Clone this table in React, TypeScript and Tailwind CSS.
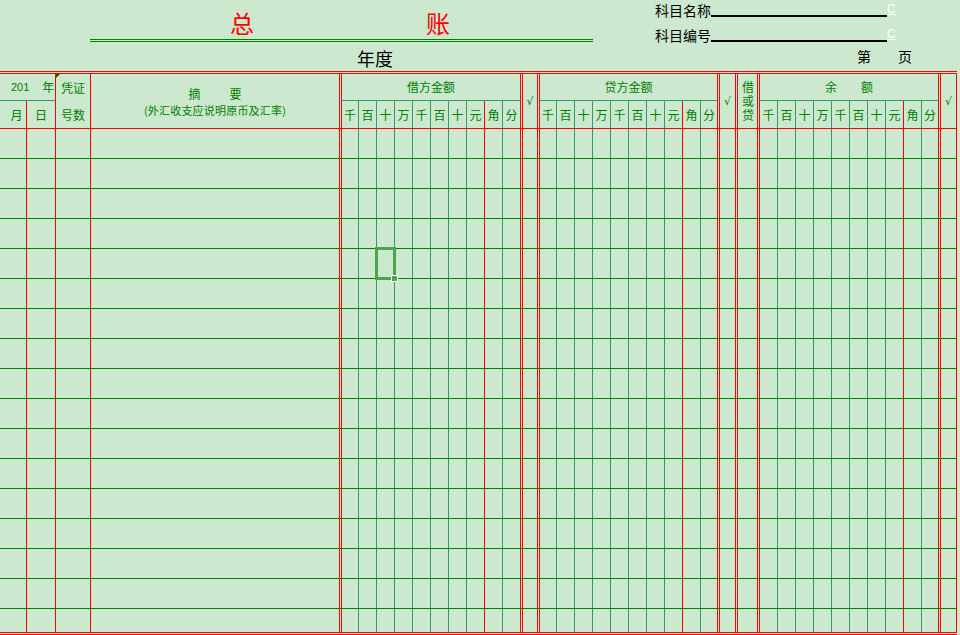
import React from "react";

const G = "border-r border-[#339966]";
const R = "border-r border-[#ff0000]";
const D = "border-r-[3px] border-double border-[#ff0000]";

const DIGITS = ["千", "百", "十", "万", "千", "百", "十", "元", "角", "分"];

// ten money cells: first width, 6 green, red after 元, green after 角, last
function amount(first: string, last: string) {
  return [
    first + " " + G,
    ...Array(6).fill("w-[18px] " + G),
    "w-[18px] " + R,
    "w-[18px] " + G,
    last,
  ];
}

const bodyCols = [
  "w-[27px] " + R,
  "w-[29px] " + R,
  "w-[35px] " + R,
  "w-[251px] " + D,
  ...amount("w-[17px]", "w-[20px] " + D),
  "w-[17px] " + D,
  ...amount("w-[17px]", "w-[19px] " + D),
  "w-[18px] " + D,
  "w-[22px] " + D,
  ...amount("w-[18px]", "w-[19px] " + D),
  "w-[16px] " + R,
];

function BodyRow({ last, selected }: { last?: boolean; selected?: number }) {
  return (
    <div
      className={
        last
          ? "flex h-[26px] border-b-[3px] border-double border-[#ff0000]"
          : "flex h-[30px] border-b border-[#008000]"
      }
    >
      {bodyCols.map((c, i) => (
        <div key={i} className={"relative shrink-0 h-full " + c}>
          {selected === i && (
            <div className="absolute z-10 left-[-2px] top-[-2px] w-[21px] h-[33px] border-[3px] border-[#4ba54b]">
              <div className="absolute left-[13px] top-[25px] w-[7px] h-[7px] bg-[#4ba54b] border border-white" />
            </div>
          )}
        </div>
      ))}
    </div>
  );
}

function Money({ title, cols, gap }: { title: string[]; cols: string[]; gap?: boolean }) {
  return (
    <>
      <div className="h-[27px] flex items-center justify-center border-b border-[#339966]">
        <div className={gap ? "flex gap-[24px]" : "flex"}>
          {title.map((t, i) => (
            <span key={i}>{t}</span>
          ))}
        </div>
      </div>
      <div className="flex-1 flex">
        {cols.map((c, i) => (
          <div key={i} className={"shrink-0 h-full flex items-center justify-center " + c}>
            {DIGITS[i]}
          </div>
        ))}
      </div>
    </>
  );
}

function Check({ w }: { w: string }) {
  return (
    <div className={"shrink-0 flex items-center justify-center text-[11px] font-['DejaVu_Sans',sans-serif] " + w + " " + D}>
      √
    </div>
  );
}

function Header() {
  return (
    <div className="flex h-[55px] border-b border-[#ff0000] text-[12px] leading-none text-[#008000]">
      <div className="w-[56px] shrink-0 flex flex-col border-r border-[#ff0000]">
        <div className="h-[27px] flex items-center border-b border-[#339966]">
          <span className="pl-[11px] text-[11px] font-['Liberation_Sans',sans-serif]">201</span>
          <span className="ml-[13px]">年</span>
        </div>
        <div className="flex-1 flex">
          <div className="w-[27px] flex items-center justify-center pl-[7px] border-r border-[#ff0000]">月</div>
          <div className="flex-1 flex items-center justify-center">日</div>
        </div>
      </div>
      <div className="relative w-[35px] shrink-0 flex flex-col border-r border-[#ff0000]">
        <span className="absolute top-0 left-0 border-t-[4px] border-r-[4px] border-t-[#006600] border-r-transparent" />
        <div className="h-[27px] flex items-center justify-center">凭证</div>
        <div className="flex-1 flex items-center justify-center">号数</div>
      </div>
      <div className={"w-[251px] shrink-0 flex flex-col items-center justify-center " + D}>
        <div className="flex gap-[29px] leading-[17px]">
          <span>摘</span>
          <span>要</span>
        </div>
        <div className="text-[11px] leading-[16px] tracking-[0.2px]">(外汇收支应说明原币及汇率)</div>
      </div>
      <div className={"w-[181px] shrink-0 flex flex-col " + D}>
        <Money title={["借方金额"]} cols={amount("w-[17px]", "w-[17px]")} />
      </div>
      <Check w="w-[17px]" />
      <div className={"w-[180px] shrink-0 flex flex-col " + D}>
        <Money title={["贷方金额"]} cols={amount("w-[17px]", "w-[16px]")} />
      </div>
      <Check w="w-[18px]" />
      <div className={"w-[22px] shrink-0 flex items-center justify-center pt-[2px] " + D}>
        <span className="[writing-mode:vertical-rl] tracking-[2px] leading-none">借或贷</span>
      </div>
      <div className={"w-[181px] shrink-0 flex flex-col " + D}>
        <Money title={["余", "额"]} gap cols={amount("w-[18px]", "w-[16px]")} />
      </div>
      <div className={"w-[16px] shrink-0 flex items-center justify-center text-[11px] font-['DejaVu_Sans',sans-serif] " + R}>
        √
      </div>
    </div>
  );
}

function Top() {
  return (
    <div className="flex h-[71px] text-black">
      <div className="w-[655px] shrink-0">
        <div className="ml-[90px] w-[503px] h-[42px] flex pt-[11px] border-b-[3px] border-double border-[#008000] text-[24px] leading-none text-[#ff0000]">
          <span className="ml-[140px]">总</span>
          <span className="ml-[172px]">账</span>
        </div>
        <div className="pl-[357px] pt-[7px] text-[18px] leading-none">年度</div>
      </div>
      <div className="flex-1 text-[14px] leading-none">
        <div className="flex items-start h-[25px] pt-[3px]">
          <span>科目名称</span>
          <span className="mt-[12px] w-[176px] h-[2px] bg-black" />
          <span className="text-[12px] text-white underline font-['Liberation_Sans',sans-serif]">C</span>
        </div>
        <div className="flex items-start h-[23px] pt-[3px]">
          <span>科目编号</span>
          <span className="mt-[12px] w-[176px] h-[2px] bg-black" />
          <span className="text-[12px] text-white underline font-['Liberation_Sans',sans-serif]">C</span>
        </div>
        <div className="flex pl-[202px] pt-[1px] gap-[27px]">
          <span>第</span>
          <span>页</span>
        </div>
      </div>
    </div>
  );
}

export default function App() {
  return (
    <div className="w-[960px] h-[635px] overflow-hidden bg-[#cce8cf] font-['Noto_Sans_CJK_SC',sans-serif]">
      <Top />
      <div className="w-[957px] border-t-[3px] border-double border-[#ff0000]">
        <Header />
        {Array.from({ length: 16 }).map((_, i) => (
          <BodyRow key={i} selected={i === 4 ? 6 : undefined} />
        ))}
        <BodyRow last />
      </div>
    </div>
  );
}
